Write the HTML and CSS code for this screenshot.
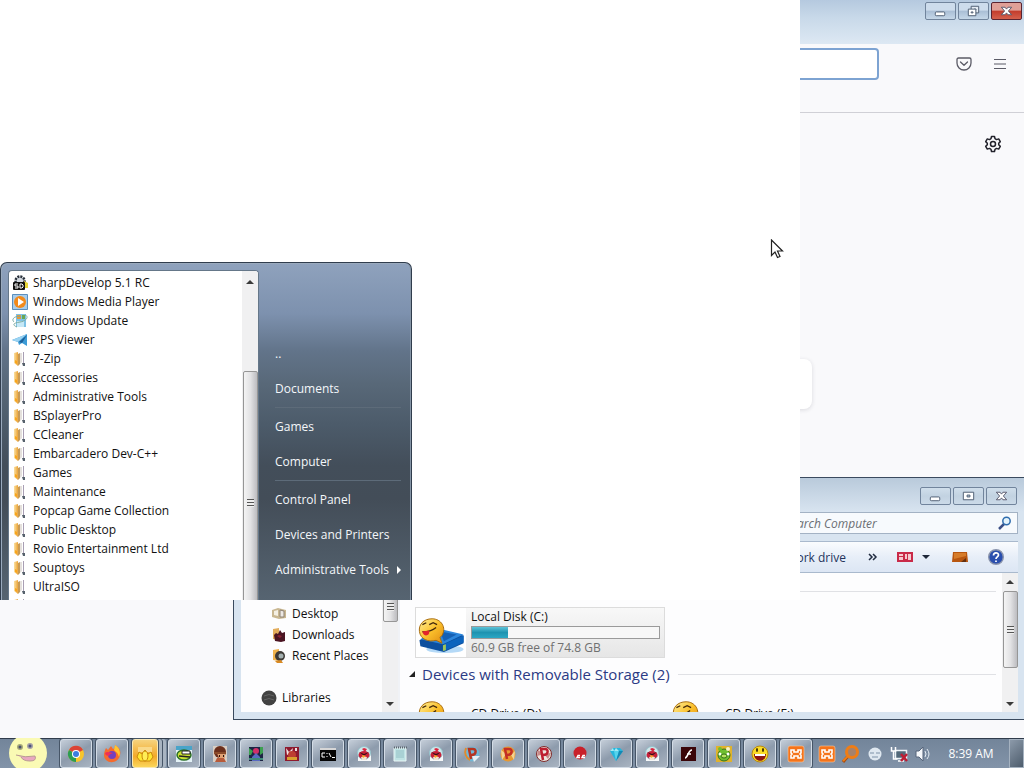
FILE: index.html
```html
<!DOCTYPE html>
<html lang="en">
<head>
  <meta charset="UTF-8">
  <meta name="viewport" content="width=device-width, initial-scale=1.0">
  <title>Desktop</title>
  <link rel="stylesheet" href="styles.css">
</head>
<body>
  <svg class="sprite" aria-hidden="true">
    <defs>
      <linearGradient id="gold" x1="0" y1="0" x2="1" y2="1">
        <stop offset="0" stop-color="#fff09a"/><stop offset=".5" stop-color="#fbc02c"/><stop offset="1" stop-color="#df8a10"/>
      </linearGradient>
      <linearGradient id="folderFill" x1="0" y1="0" x2="1" y2="0">
        <stop offset="0" stop-color="#fbe0a0"/><stop offset="1" stop-color="#eaa43a"/>
      </linearGradient>
    </defs>
    <symbol id="folder" viewBox="0 0 16 16">
      <path d="M2 2l4-1v14l-4-3z" fill="url(#folderFill)"/>
      <path d="M6 3l2-1v11l-2 2z" fill="#c79a55"/>
      <path d="M8 2h2v9l-2 2z" fill="#e4e0dc"/>
      <path d="M11 1h1v13h-1z" fill="#a99fb4"/>
      <path d="M10 12h3v3h-2z" fill="#56616c"/>
      <path d="M3 9l2 1v3l-2-1z" fill="#f9a51c"/>
    </symbol>
    <symbol id="drive" viewBox="0 0 50 50">
      <ellipse cx="29" cy="42" rx="19" ry="4" fill="#b4d9f7"/>
      <path d="M3 33l18-11 27 6v8L28 45 4 39z" fill="#0c4f9e"/>
      <path d="M4 32l18-11 26 6-21 10z" fill="#2b86dc"/>
      <path d="M24 24l17 3-13 7z" fill="#1560b4"/>
      <path d="M28 37l20-9v7l-20 9z" fill="#0b63bd"/>
      <path d="M27 38l3-1v6l-3 1z" fill="#9fc55a"/>
      <path d="M26 28c5-8-1-17-10-17C7 11 2 17 3 24c1 8 9 11 17 9l6 3-2-6z" fill="url(#gold)" stroke="#a86a0c"/>
      <path d="M6 17l4-2M13 17l4-2 4 2M6 24c5 1 10-1 14-4" fill="none" stroke="#43280c" stroke-width="1.3"/>
      <path d="M6 24c1 6 8 5 7-1z" fill="#e3242b"/>
    </symbol>
    <symbol id="bird" viewBox="0 0 20 20">
      <path d="M4 9h13v8H4z" fill="#f6f8f9"/>
      <circle cx="10" cy="9" r="6.500" fill="#d3e7ea" stroke="#93c3cc"/>
      <path d="M8 5l2-1 3 1-2 3z" fill="#d8273f"/>
      <ellipse cx="10" cy="11" rx="5.500" ry="4" fill="#c81f38"/>
      <path d="M7 13q3-1 6 0l-1 3H8z" fill="#f1e5d3"/>
      <path d="M5 8l5 2 5-2-4 3H9z" fill="#301318"/>
      <path d="M8 11l4 1-3 2z" fill="#f5ae2b"/>
    </symbol>
    <symbol id="xampp" viewBox="0 0 20 20">
      <rect x="2" y="2" width="16" height="16" rx="2" fill="#f5741b" stroke="#fbc9a0" stroke-width=".6"/>
      <path d="M5 6h3v2h4V6h3v3l-1 1 1 1v3h-3v-2H8v2H5v-3l1-1-1-1z" fill="none" stroke="#fff" stroke-width="1.600"/>
    </symbol>
    <symbol id="smiley" viewBox="0 0 20 20">
      <circle cx="10" cy="10" r="8" fill="#fbdc25" stroke="#b88a13"/>
      <path d="M4 10h12c0 9-12 9-12 0z" fill="#8e1611"/>
      <path d="M5 10h10v2H5z" fill="#fff"/>
      <ellipse cx="7" cy="6" rx="1" ry="2" fill="#3a2705"/><ellipse cx="13" cy="6" rx="1" ry="2" fill="#3a2705"/>
    </symbol>
    <symbol id="min" viewBox="0 0 30 17">
      <rect x="9.500" y="9.500" width="10" height="4" rx="1" fill="#fff" stroke="#4b5b70"/>
    </symbol>
    <symbol id="max" viewBox="0 0 30 17">
      <path d="M9.500 4.500h11v8h-11zM13.500 7.500h3v2h-3z" fill="#fff" fill-rule="evenodd" stroke="#4b5b70"/>
    </symbol>
    <symbol id="restore" viewBox="0 0 30 17">
      <path d="M12.500 3.500h8v7h-8zM15.500 6.500h2v1h-2z" fill="#e6edf5" stroke="#4b5b70"/>
      <path d="M9.500 6.500h8v7h-8zM12.500 9.500h2v1h-2z" fill="#fff" stroke="#4b5b70"/>
    </symbol>
    <symbol id="close" viewBox="0 0 30 17">
      <path d="M9.500 4.500h4l1.500 2 1.500-2h4l-3.500 4 3.500 4h-4l-1.500-2-1.500 2h-4l3.500-4z" fill="#fff" stroke="#56566a"/>
    </symbol>
  </svg>

  <div class="desktop">
    <!-- Browser, maximised -->
    <section class="browser">
      <header class="browser-title">
        <button class="win-btn" aria-label="Minimize"><svg><use href="#min"/></svg></button>
        <button class="win-btn" aria-label="Restore"><svg><use href="#restore"/></svg></button>
        <button class="win-btn danger" aria-label="Close"><svg><use href="#close"/></svg></button>
      </header>
      <div class="browser-bar">
        <input class="url" type="text" aria-label="Address">
        <button class="plain-btn" aria-label="Pocket">
          <svg width="16" height="16" viewBox="0 0 16 16" fill="none" stroke="#5b5b66" stroke-width="1.3" stroke-linecap="round" stroke-linejoin="round"><path d="M2.500 2h11Q15 2 15 3.500V7A7 7 0 0 1 1 7V3.500Q1 2 2.500 2zM4.500 6L8 9.300 11.500 6"/></svg>
        </button>
        <button class="plain-btn" aria-label="Menu">
          <svg width="16" height="16" viewBox="0 0 16 16" stroke="#5b5b66" stroke-width="1.2"><path d="M2 3.500h12M2 8h12M2 12.500h12"/></svg>
        </button>
      </div>
      <div class="page">
        <button class="plain-btn gear" aria-label="Settings">
          <svg width="18" height="18" viewBox="0 0 18 18" fill="none" stroke="#22222b" stroke-width="1.500" stroke-linejoin="round"><path d="M7.500 1.500h3l.5 2.200 1.500.9 2.200-.7 1.600 2.700L14.700 8.200v1.600l1.600 1.600-1.600 2.700-2.200-.7-1.500.9-.5 2.200h-3L7 14.300l-1.500-.9-2.200.7-1.600-2.700 1.600-1.600V8.200L1.700 6.600l1.600-2.700 2.200.7L7 3.700z"/><circle cx="9" cy="9" r="2.500"/></svg>
        </button>
        <div class="search-card"></div>
      </div>
    </section>

    <!-- Explorer -->
    <section class="explorer">
      <header class="explorer-title">
        <button class="win-btn" aria-label="Minimize"><svg><use href="#min"/></svg></button>
        <button class="win-btn" aria-label="Maximize"><svg><use href="#max"/></svg></button>
        <button class="win-btn" aria-label="Close"><svg><use href="#close"/></svg></button>
      </header>
      <div class="search-row">
        <div class="search">
          <input type="text" aria-label="Search Computer" placeholder="Search Computer">
          <svg width="14" height="14" viewBox="0 0 14 14" fill="none"><path d="M6 8l-5 5" stroke="#3b4f86" stroke-width="2.500"/><circle cx="8.500" cy="5" r="3.700" fill="#e3f3fb" stroke="#2f6dae" stroke-width="1.500"/></svg>
        </div>
      </div>
      <div class="command-bar">
        <button class="cmd">Map network drive</button>
        <button class="cmd more" aria-label="More">
          <svg width="10" height="8" viewBox="0 0 10 8" fill="none" stroke="#222c40" stroke-width="1.500"><path d="M1 1l3 3-3 3M5 1l3 3-3 3"/></svg>
        </button>
        <button class="cmd view" aria-label="Change view">
          <svg width="16" height="12" viewBox="0 0 16 12"><path d="M0 1h16v10H0z" fill="#c92a48"/><path d="M2 3h4v2H2zM8 3h2v5H8zM11 3h3v6h-3zM2 6h4v3H2z" fill="#f5c9cf"/></svg>
          <svg width="8" height="5" viewBox="0 0 8 5"><path d="M0 0h8L4 4z" fill="#1e2738"/></svg>
        </button>
        <button class="cmd preview" aria-label="Preview pane">
          <svg width="16" height="12" viewBox="0 0 16 12"><path d="M1 1h14l1 10H0z" fill="#b8560f"/><path d="M2 2h12v3L2 8z" fill="#d67c2a"/><path d="M9 11l5-4v4z" fill="#63300f"/></svg>
        </button>
        <button class="cmd help" aria-label="Help">
          <svg width="16" height="16" viewBox="0 0 16 16"><circle cx="8" cy="8" r="7.300" fill="#2a4fae" stroke="#8a94ac" stroke-width="1.400"/><path d="M5.500 6.500c0-3.500 5-3.500 5-.5 0 2-2.500 1.800-2.500 4M8 11.500v1.500" fill="none" stroke="#fff" stroke-width="1.700"/></svg>
        </button>
      </div>
      <div class="explorer-body">
        <nav class="sidebar">
          <a href="#"><svg viewBox="0 0 16 16"><path d="M1 4l6-2 8 2v8l-7 1-7-2z" fill="#c9b791"/><path d="M3 5l4-1v6l-4-1z" fill="#f4efe3"/><path d="M9 4l4 1v6H9z" fill="#ece8e4" stroke="#8f8375"/></svg>Desktop</a>
          <a href="#"><svg viewBox="0 0 16 16"><path d="M2 2l6-1v12l-6-1z" fill="#e3ad5c"/><path d="M3 8l2-2 2 1 2-4 2 3 3-1v9l-4 1-6-1z" fill="#4a1422"/><path d="M6 9l2-1 3 1-2 2z" fill="#8b2233"/></svg>Downloads</a>
          <a href="#"><svg viewBox="0 0 16 16"><path d="M2 2l6-1v12l-6-1z" fill="#f0b34d"/><circle cx="9" cy="8" r="5" fill="#3d3a36"/><circle cx="10" cy="8" r="2.500" fill="#a4b0b0"/><path d="M4 13l6-1 2 3H6z" fill="#d98a22"/></svg>Recent Places</a>
          <a href="#" class="libraries"><svg viewBox="0 0 16 16"><circle cx="8" cy="8" r="7.500" fill="#424242"/><path d="M3 6q5-3 10 0M3 10q5-3 10 0" fill="none" stroke="#646464"/></svg>Libraries</a>
        </nav>
        <div class="scroll side-scroll">
          <span class="thumb"><i></i></span>
          <b class="down"></b>
        </div>
        <main class="files">
          <h2 class="group"><span class="fold"></span>Hard Disk Drives (1)</h2>
          <div class="tiles">
            <a href="#" class="tile active">
              <svg class="tile-icon"><use href="#drive"/></svg>
              <span class="tile-text">
                <span class="name">Local Disk (C:)</span>
                <span class="bar"><span class="used" style="width: 19%"></span></span>
                <span class="free">60.9 GB free of 74.8 GB</span>
              </span>
            </a>
          </div>
          <h2 class="group"><span class="fold"></span>Devices with Removable Storage (2)</h2>
          <div class="tiles">
            <a href="#" class="tile">
              <svg class="tile-icon"><use href="#drive"/></svg>
              <span class="tile-text"><span class="name">CD Drive (D:)</span></span>
            </a>
            <a href="#" class="tile">
              <svg class="tile-icon"><use href="#drive"/></svg>
              <span class="tile-text"><span class="name">CD Drive (E:)</span></span>
            </a>
          </div>
        </main>
        <div class="scroll main-scroll">
          <b class="up"></b>
          <span class="thumb"><i></i></span>
          <b class="down"></b>
        </div>
      </div>
    </section>

    <!-- Blank window with the start menu over it -->
    <section class="blank">
      <div class="start-menu">
        <div class="programs">
          <ul class="program-list">
            <li><a href="#"><svg viewBox="0 0 16 16"><circle cx="8" cy="6" r="4.500" fill="#d3d9e0" stroke="#28303a" stroke-width="2.500" stroke-dasharray="2 1"/><path d="M12 6l4 2v5h-4z" fill="#e8d637"/><rect x="1" y="7" width="12" height="8" rx="1" fill="#111"/><path d="M6 9H3v2h3v2H3M8 9h2l1 1v2l-1 1H8z" fill="none" stroke="#fff"/></svg>SharpDevelop 5.1 RC</a></li>
            <li><a href="#"><svg viewBox="0 0 16 16"><path d="M.5.5h15v15H.5z" fill="#a8cdec" stroke="#5b8fbe"/><circle cx="8" cy="8" r="6" fill="#f28a1c"/><path d="M6 4l6 4-6 4z" fill="#fff"/></svg>Windows Media Player</a></li>
            <li><a href="#"><svg viewBox="0 0 16 16"><path d="M4 1h10v13H4z" fill="#7fc2e6"/><path d="M5 2h4v4H5z" fill="#e79a3c"/><path d="M10 2h3v4h-3z" fill="#68a854"/><path d="M5 8h7v6H5z" fill="#c6e8f6"/><path d="M13 2c4 1 2 6-5 7S0 12 5 14M2 9C-2 5 6 2 9 4" fill="none" stroke="#7ca99e"/></svg>Windows Update</a></li>
            <li><a href="#"><svg viewBox="0 0 16 16"><path d="M0 8l15-6v12l-5-3-3 2-1-3z" fill="#3c9bd6"/><path d="M0 8l15-6-9 8z" fill="#9bd3f2"/><path d="M7 10l8-7-5 8z" fill="#1c5f98"/></svg>XPS Viewer</a></li>
            <li><a href="#"><svg><use href="#folder"/></svg>7-Zip</a></li>
            <li><a href="#"><svg><use href="#folder"/></svg>Accessories</a></li>
            <li><a href="#"><svg><use href="#folder"/></svg>Administrative Tools</a></li>
            <li><a href="#"><svg><use href="#folder"/></svg>BSplayerPro</a></li>
            <li><a href="#"><svg><use href="#folder"/></svg>CCleaner</a></li>
            <li><a href="#"><svg><use href="#folder"/></svg>Embarcadero Dev-C++</a></li>
            <li><a href="#"><svg><use href="#folder"/></svg>Games</a></li>
            <li><a href="#"><svg><use href="#folder"/></svg>Maintenance</a></li>
            <li><a href="#"><svg><use href="#folder"/></svg>Popcap Game Collection</a></li>
            <li><a href="#"><svg><use href="#folder"/></svg>Public Desktop</a></li>
            <li><a href="#"><svg><use href="#folder"/></svg>Rovio Entertainment Ltd</a></li>
            <li><a href="#"><svg><use href="#folder"/></svg>Souptoys</a></li>
            <li><a href="#"><svg><use href="#folder"/></svg>UltraISO</a></li>
            <li><a href="#" aria-label="More programs"><svg><use href="#folder"/></svg></a></li>
          </ul>
          <div class="scroll menu-scroll">
            <b class="up"></b>
            <span class="thumb"><i></i></span>
          </div>
        </div>
        <nav class="places">
          <a href="#">..</a>
          <a href="#">Documents</a>
          <hr>
          <a href="#">Games</a>
          <a href="#">Computer</a>
          <hr>
          <a href="#">Control Panel</a>
          <a href="#">Devices and Printers</a>
          <a href="#" class="has-sub">Administrative Tools</a>
        </nav>
      </div>
    </section>

    <footer class="taskbar">
      <button class="start" aria-label="Start">
        <svg width="40" height="30" viewBox="0 0 40 30"><circle cx="20" cy="15" r="19" fill="#fafab4"/><circle cx="12" cy="9" r="3" fill="#a5a878"/><circle cx="22" cy="8" r="3" fill="#a5a0a5"/><circle cx="12" cy="9" r="1.500" fill="#4a5070"/><circle cx="22" cy="8" r="1.500" fill="#4a5080"/><path d="M8 17q9 3 19 1 2 5-5 5-7 0-9-4" fill="#e9a7c0" stroke="#b79b93"/></svg>
      </button>
      <div class="tasks">
        <button class="task" aria-label="Chrome"><svg viewBox="0 0 20 20"><circle cx="10" cy="10" r="8" fill="#f7c52b"/><path d="M10 10L3 6a8 8 0 0 1 14 0z" fill="#dc4437"/><path d="M3 6l7 4v8A8 8 0 0 1 3 6z" fill="#2c9d53"/><circle cx="10" cy="10" r="4" fill="#fff"/><circle cx="10" cy="10" r="3" fill="#3b7de0"/></svg></button>
        <button class="task" aria-label="Firefox"><svg viewBox="0 0 20 20"><path d="M4 4l2 2 3-4 2 3c2 0 2-3 2-4 5 3 6 6 5 10-2 10-16 9-16 0 0-3 1-5 2-7z" fill="#f66a2d"/><path d="M13 1c5 3 6 8 4 12-1-4-3-5-5-7z" fill="#ffc52e"/><circle cx="10" cy="11" r="4" fill="#7340bc"/><path d="M3 9c3-2 5 0 8 0-3 1-4 2-4 3-2 0-4-1-4-3z" fill="#ef2e56"/></svg></button>
        <button class="task active" aria-label="Explorer"><svg viewBox="0 0 20 20"><path d="M3 3h14v5H3z" fill="#f9d98a"/><path d="M2 13l2-5 3 2 3-4 3 4 3-2 2 5-3 4H5z" fill="#ffe832" stroke="#c98a0c"/><ellipse cx="10" cy="12" rx="3" ry="5" fill="#ffee55" stroke="#c9860c"/></svg></button>
        <button class="task" aria-label="Game"><svg viewBox="0 0 20 20"><path d="M2 2h16v16H2z" fill="#e4f2f6"/><path d="M2 2h16v4H2z" fill="#49a4c9"/><ellipse cx="10" cy="11" rx="7" ry="5" fill="#c8df32" stroke="#2b6f26" stroke-width="1.500"/><path d="M8 7h8v3H8z" fill="#fff" stroke="#222"/><path d="M5 12l11 1" stroke="#222" stroke-width="1.500"/></svg></button>
        <button class="task" aria-label="Adventure"><svg viewBox="0 0 20 20"><path d="M3 2h14v16H3z" fill="#d9cec4"/><circle cx="10" cy="8" r="6" fill="#6b2f1c"/><path d="M7 9h8v5H9z" fill="#e1a173"/><path d="M4 8h12v2H4z" fill="#8b4b2a"/><path d="M9 11h1v2H9zM13 11h1v2h-1z" fill="#2b1510"/><path d="M7 14h7l2 4H5z" fill="#b85b3a"/></svg></button>
        <button class="task" aria-label="Space game"><svg viewBox="0 0 20 20"><path d="M3 3h14v14H3z" fill="#1d2444"/><path d="M3 4l4 3-2 4H3zM14 3h3v6l-3 2z" fill="#3c9f51"/><circle cx="10" cy="7" r="3" fill="#d22f69"/><path d="M6 13l4-4 4 4v4H6z" fill="#596ac1"/><path d="M3 14h14v2H3z" fill="#3f8a78"/></svg></button>
        <button class="task" aria-label="Puzzle"><svg viewBox="0 0 20 20"><path d="M3 3h14v14H3z" fill="#8e1a2e"/><path d="M4 4l3 4 4-4-1 4-5 3zM13 4h2v3h-2z" fill="#f2e2e2"/><circle cx="10" cy="11" r="4" fill="#bd3f32"/><path d="M5 13h10v3H5z" fill="#d9a12f"/></svg></button>
        <button class="task" aria-label="Command Prompt"><svg viewBox="0 0 20 20"><path d="M2 4h16v13H2z" fill="#050505"/><path d="M2 4h16v2H2z" fill="#d6d6d6"/><path d="M7 9H4v4h3M9 9v1M9 12v1M11 9l2 4M14 13.500h3" fill="none" stroke="#fff"/></svg></button>
        <button class="task" aria-label="Angry Birds"><svg><use href="#bird"/></svg></button>
        <button class="task" aria-label="Notepad"><svg viewBox="0 0 20 20"><path d="M4 4h12v13H4z" fill="#bfe3e4" stroke="#e9f6f6"/><path d="M6 7h8M6 9h8M6 11h8M6 13h8" stroke="#92bfc4"/><path d="M4 3.500h13" stroke="#5c6770" stroke-width="2" stroke-dasharray="1 1"/></svg></button>
        <button class="task" aria-label="Angry Birds Seasons"><svg><use href="#bird"/></svg></button>
        <button class="task" aria-label="Peggle"><svg viewBox="0 0 20 20"><circle cx="10" cy="10" r="7.500" fill="#71b7d6"/><path d="M18 12l-6 6-2-6z" fill="#e8eef1"/><path d="M9 15L7 5h3c5-1 5 6-1 6" fill="none" stroke="#b63421" stroke-width="2.500"/><path d="M4 4c-2 5 0 10 4 12" fill="none" stroke="#e28a2b" stroke-width="2"/></svg></button>
        <button class="task" aria-label="Peggle Nights"><svg viewBox="0 0 20 20"><circle cx="10" cy="10" r="7.500" fill="#e79932"/><path d="M3 6l5 4-4 6zM17 7l-4 4 3 5z" fill="#f4d391"/><path d="M9 15L7 5h3c5-1 5 6-1 6" fill="none" stroke="#c42f25" stroke-width="2.500"/></svg></button>
        <button class="task" aria-label="Peggle Deluxe"><svg viewBox="0 0 20 20"><circle cx="10" cy="10" r="7.500" fill="#ece6df" stroke="#7f2b2b"/><path d="M10 10L3 12l1-6zM17 9l-3 6-4-5z" fill="#c98a8a"/><path d="M9 16L7 5h3c5-1 5 6-1 6" fill="none" stroke="#be1f30" stroke-width="2.500"/></svg></button>
        <button class="task" aria-label="CCleaner"><svg viewBox="0 0 20 20"><circle cx="10" cy="9" r="6.500" fill="#c9202a"/><path d="M10 11.500H8l-1 2h3M15 11.500h-2l-1 2h3" fill="none" stroke="#fff" stroke-width="1.400"/></svg></button>
        <button class="task" aria-label="Bejeweled"><svg viewBox="0 0 20 20"><path d="M4 7l3-3h7l3 3-7 10z" fill="#25b5dc"/><path d="M4 7l3-3 1 3zM8 7l2-3 3 3z" fill="#a1eaf5"/><path d="M8 7h5l-3 10z" fill="#55d4ed"/><path d="M13 7h4l-7 10z" fill="#1488b4"/></svg></button>
        <button class="task" aria-label="Angry Birds Space"><svg><use href="#bird"/></svg></button>
        <button class="task" aria-label="Flash"><svg viewBox="0 0 20 20"><path d="M3 3h15v14H3z" fill="#3a0508"/><path d="M14 6c-4 0-4 8-7 8M9 10h4" fill="none" stroke="#fff" stroke-width="1.600"/></svg></button>
        <button class="task" aria-label="Bad Piggies"><svg viewBox="0 0 20 20"><path d="M2 2h16v16H2z" fill="#e0b32c"/><circle cx="10" cy="11" r="6" fill="#6fbe30" stroke="#35731a"/><circle cx="6" cy="5" r="2" fill="#6fbe30"/><circle cx="14" cy="5" r="2" fill="#f6f2c6"/><circle cx="6" cy="10" r="1.500" fill="#fff"/><circle cx="14" cy="10" r="1.500" fill="#fff"/><ellipse cx="10" cy="12" rx="3" ry="2" fill="#b8e45e" stroke="#35731a"/></svg></button>
        <button class="task" aria-label="Messenger"><svg><use href="#smiley"/></svg></button>
        <button class="task" aria-label="XAMPP"><svg><use href="#xampp"/></svg></button>
      </div>
      <div class="tray">
        <svg viewBox="0 0 20 20"><use href="#xampp"/></svg>
        <svg viewBox="0 0 20 20"><path d="M8 11l-6 7" stroke="#a54b0e" stroke-width="3"/><circle cx="11" cy="8" r="5.500" fill="#a6826b" stroke="#ee7d16" stroke-width="3"/><path d="M7 12l-5 5" stroke="#ee7d16" stroke-width="2"/></svg>
        <svg viewBox="0 0 20 20"><circle cx="10" cy="10" r="6.500" fill="#dfe8f0"/><path d="M5 9h4M11 9h4M7 13h6" stroke="#7f92a7" stroke-width="1.200"/></svg>
        <svg viewBox="0 0 20 20"><path d="M6.500 6.500h11v8h-11z" fill="#526879" stroke="#eef3f7" stroke-width="1.500"/><path d="M2.500 3v4h4V3M4.500 7v8h4M9 17h6" fill="none" stroke="#fff" stroke-width="1.500"/><path d="M12 10l6 7M18 10l-6 7" stroke="#bd1d33" stroke-width="2.500"/></svg>
        <svg viewBox="0 0 20 20"><path d="M3 7h3l4-4v14l-4-4H3z" fill="#f5f8fb" stroke="#56657a"/><path d="M12 7q2 3 0 6M14 5q4 5 0 10" fill="none" stroke="#e5edf5"/></svg>
      </div>
      <time class="clock">8:39 AM</time>
      <button class="show-desktop" aria-label="Show desktop"></button>
    </footer>

    <svg class="cursor" width="14" height="20" viewBox="0 0 14 20"><path d="M1.500 1v15.500l3.500-3.500 2.500 5.500 2.500-1-2.500-5.500h5z" fill="#fff" stroke="#222" stroke-width="1.200"/></svg>
  </div>
</body>
</html>
```
FILE: styles.css
```css
:root {
  --page: #f9f9fb;
  --frame: #d8e4f0;
  --frame-dark: #3a4a5e;
  --ink: #111;
}

* {
  box-sizing: border-box;
}

body {
  margin: 0;
  font-family: "Open Sans", "Noto Sans", sans-serif;
  font-size: 12px;
  color: var(--ink);
}

a {
  color: inherit;
  text-decoration: none;
  white-space: nowrap;
}

button {
  padding: 0;
  border: none;
  background: none;
  font: inherit;
  color: inherit;
}

svg {
  display: block;
  flex: none;
}

.sprite {
  position: absolute;
  width: 0;
  height: 0;
}

.desktop {
  position: relative;
  height: 100vh;
  min-height: 768px;
  overflow: hidden;
  background: var(--page);
}

/* window buttons */
.win-btn {
  width: 31px;
  height: 18px;
  border: 1px solid #71849c;
  border-radius: 2px;
  background: linear-gradient(#cddcec 45%, #a9bed5 50%, #c5d7e8);
}

.win-btn svg {
  width: 29px;
  height: 16px;
}

.win-btn.danger {
  border-color: #5a2430;
  background: linear-gradient(#e0a097 45%, #c23c2c 50%, #d4604c);
}

/* browser */
.browser {
  display: flex;
  flex-direction: column;
  height: 100%;
}

.browser-title {
  display: flex;
  justify-content: flex-end;
  gap: 2px;
  height: 44px;
  padding: 2px 2px 0;
  background: linear-gradient(#b5c9df, #c8d9e9 40%, #dde8f3);
}

.browser-bar {
  display: flex;
  align-items: flex-start;
  gap: 20px;
  height: 69px;
  padding: 4px 16px 0 146px;
  border-bottom: 1px solid #d0d0d6;
}

.url {
  flex: 1;
  height: 32px;
  margin-right: 57px;
  border: 2px solid #7da3d2;
  border-radius: 4px;
  background: #fff;
}

.plain-btn {
  display: flex;
  align-items: center;
  height: 32px;
}

.page {
  display: flex;
  flex-direction: column;
  flex: 1;
  padding: 15px 22px;
}

.gear {
  align-self: flex-end;
}

.search-card {
  width: 600px;
  height: 50px;
  margin: 199px auto 0;
  border-radius: 8px;
  background: #fff;
  box-shadow: 0 1px 4px rgba(40, 40, 60, 0.15);
}

/* explorer */
.explorer {
  position: absolute;
  top: 477px;
  right: 0;
  bottom: 48px;
  left: 233px;
  display: flex;
  flex-direction: column;
  padding: 0 6px 7px 7px;
  border: 1px solid var(--frame-dark);
  border-width: 1px 0 1px 1px;
  background: var(--frame);
}

.explorer-title {
  display: flex;
  justify-content: flex-end;
  gap: 2px;
  height: 34px;
  margin: 0 -6px 0 -7px;
  padding: 9px 7px 0;
  background: linear-gradient(#b9cadb, var(--frame));
}

.explorer-title .win-btn {
  background: linear-gradient(#d0deeb, #c2d2e1 50%, #cbdae8);
}

.search-row {
  display: flex;
  justify-content: flex-end;
  height: 29px;
}

.search {
  display: flex;
  align-items: center;
  width: 240px;
  height: 22px;
  padding: 0 5px 0 6px;
  border: 1px solid #a3b2c4;
  background: #f7fafd;
}

.search input {
  flex: 1;
  min-width: 0;
  padding: 0;
  border: none;
  background: none;
  font: italic 12px "Open Sans", "Noto Sans", sans-serif;
}

.search input::placeholder {
  color: #6b6e73;
}

.command-bar {
  display: flex;
  align-items: center;
  justify-content: flex-end;
  height: 32px;
  padding-right: 14px;
  border: 1px solid #a9b9cd;
  border-width: 1px 0;
  background: linear-gradient(#fafcfe, #e7eef8 50%, #dce6f4);
  color: #24345c;
}

.more {
  margin-left: 22px;
}

.view {
  display: flex;
  align-items: center;
  gap: 9px;
  margin-left: 19px;
}

.preview {
  margin-left: 22px;
}

.help {
  margin-left: 20px;
}

.explorer-body {
  display: flex;
  flex: 1;
  min-height: 0;
  overflow: hidden;
  background: #fdfdfe;
}

.sidebar {
  width: 141px;
  padding-top: 30px;
}

.sidebar a {
  display: flex;
  align-items: center;
  gap: 5px;
  height: 21px;
  padding-left: 30px;
}

.sidebar svg {
  width: 16px;
  height: 16px;
}

.sidebar .libraries {
  margin-top: 21px;
  padding-left: 20px;
}

/* scrollbars */
.scroll {
  display: flex;
  flex-direction: column;
  align-items: center;
  flex: none;
  width: 16px;
  background: #f0f0f1;
}

.thumb {
  display: flex;
  align-items: center;
  justify-content: center;
  flex: none;
  width: 15px;
  border: 1px solid #969696;
  border-radius: 2px;
  background: linear-gradient(90deg, #f4f4f4, #e2e2e4 50%, #bcbcc0);
}

.thumb i {
  width: 7px;
  height: 8px;
  background: repeating-linear-gradient(#555 0 1px, #eee 1px 3px);
}

.up,
.down {
  width: 0;
  border: 4px solid transparent;
}

.up {
  border-top-width: 0;
  border-bottom-color: #3a3a3a;
}

.down {
  margin-top: auto;
  border-bottom-width: 0;
  border-top-color: #3a3a3a;
}

.side-scroll {
  padding-bottom: 6px;
}

.side-scroll .thumb {
  height: 49px;
  padding-top: 18px;
}

.main-scroll {
  padding: 7px 0 6px;
}

.main-scroll .thumb {
  height: 77px;
  margin-top: 7px;
}

.files {
  flex: 1;
  min-width: 0;
  padding: 6px 6px 0 9px;
  border-left: 2px solid #f0f2f6;
}

.group {
  display: flex;
  align-items: center;
  height: 24px;
  margin: 0;
  font-size: 15px;
  font-weight: normal;
  color: #2b3a84;
}

.group::after {
  content: "";
  flex: 1;
  height: 1px;
  margin-left: 8px;
  background: #e0e1e5;
}

.fold {
  width: 0;
  margin-right: 7px;
  border: 3px solid transparent;
  border-right-color: #222;
  border-bottom-color: #222;
}

.tiles {
  display: flex;
  gap: 4px;
  padding: 4px 0 4px 6px;
}

.tile {
  display: flex;
  align-items: center;
  flex: none;
  width: 250px;
  height: 51px;
  padding-right: 4px;
  border: 1px solid transparent;
}

.tile.active {
  border-color: #dcdcdc;
  background: linear-gradient(#f8f8f8, #e6e6e6);
}

.tile-icon {
  width: 50px;
  height: 49px;
}

.active .tile-icon {
  background: #fff;
}

.tile-text {
  display: flex;
  flex-direction: column;
  flex: 1;
  margin-left: 5px;
  padding-bottom: 4px;
  line-height: 16px;
}

.active .tile-text {
  padding-bottom: 0;
}

.bar {
  display: block;
  height: 13px;
  margin: 1px 0;
  border: 1px solid #9a9a9a;
  background: #f7f7f7;
}

.used {
  display: block;
  height: 100%;
  background: linear-gradient(#5cc3d8, #1f93b0 50%, #2ba7c4);
}

.free {
  color: #707070;
}

/* blank window */
.blank {
  position: absolute;
  top: 0;
  left: 0;
  display: flex;
  align-items: flex-end;
  width: 800px;
  height: 600px;
  overflow: hidden;
  background: #fff;
}

/* start menu */
.start-menu {
  display: flex;
  width: 412px;
  height: 338px;
  padding: 7px 0 0 7px;
  border: 1px solid #303d4d;
  border-bottom: none;
  border-radius: 7px 7px 0 0;
  background: linear-gradient(#8fa2bd, #7d91ae 15%, #62748a 26%, #586878 36%, #4c5b6a 48%, #434e5a 60%, #434d58 70%, #566471);
  box-shadow: inset 1px 1px 0 #9aaabd, inset -1px 0 0 #8595a6;
}

.programs {
  display: flex;
  width: 252px;
  border: 1px solid #657789;
  border-bottom: none;
  border-radius: 4px 4px 0 0;
  background: #fff;
  overflow: hidden;
}

.program-list {
  flex: 1;
  margin: 0;
  padding: 2px 0 0 3px;
  list-style: none;
}

.program-list a {
  display: flex;
  align-items: center;
  gap: 5px;
  height: 19px;
}

.program-list svg {
  width: 16px;
  height: 16px;
}

.menu-scroll {
  padding-top: 9px;
}

.menu-scroll .thumb {
  height: 264px;
  margin-top: 87px;
}

.places {
  flex: 1;
  padding: 66px 10px 0 13px;
  color: #f4f7fa;
}

.places a {
  display: flex;
  align-items: center;
  height: 35px;
  padding-left: 3px;
}

.places hr {
  height: 1px;
  margin: 1px 0 1px 3px;
  border: none;
  background: #5d6b79;
}

.has-sub::after {
  content: "";
  margin-left: 8px;
  border: 4px solid transparent;
  border-right-width: 0;
  border-left-color: #fff;
}

/* taskbar */
.taskbar {
  position: absolute;
  right: 0;
  bottom: 0;
  left: 0;
  display: flex;
  align-items: stretch;
  height: 30px;
  border-top: 1px solid #303c4b;
  background: linear-gradient(#73859a, #8293a8);
}

.start {
  width: 40px;
  margin: -1px 0 0 8px;
}

.tasks {
  display: flex;
  gap: 4px;
  margin-left: 12px;
}

.task {
  display: flex;
  align-items: center;
  justify-content: center;
  width: 32px;
  border: 1px solid #d3dce6;
  border-radius: 3px;
  background: linear-gradient(150deg, #c5ced9, #8d9bac 50%, #a9b4c1);
  box-shadow: 0 0 0 1px #465567;
}

.task svg {
  width: 20px;
  height: 20px;
}

.task.active {
  width: 26px;
  margin-right: 6px;
  border-color: #fbe9b3;
  background: linear-gradient(#f6d37e, #f3a92a 60%, #fbd65a);
  box-shadow: 0 0 0 1px #465567, 4px 0 0 0 #a8b4c1, 5px 0 0 0 #465567, 8px 0 0 0 #a8b4c1;
}

.tray {
  display: flex;
  align-items: center;
  gap: 4px;
  margin-left: auto;
}

.tray svg {
  width: 20px;
  height: 20px;
}

.clock {
  width: 76px;
  line-height: 29px;
  text-align: center;
  color: #fff;
}

.show-desktop {
  width: 15px;
  border: 1px solid #a5b2c0;
  background: linear-gradient(135deg, #8c9aaa, #4d5c6c);
}

.cursor {
  position: absolute;
  top: 239px;
  left: 770px;
}
```
